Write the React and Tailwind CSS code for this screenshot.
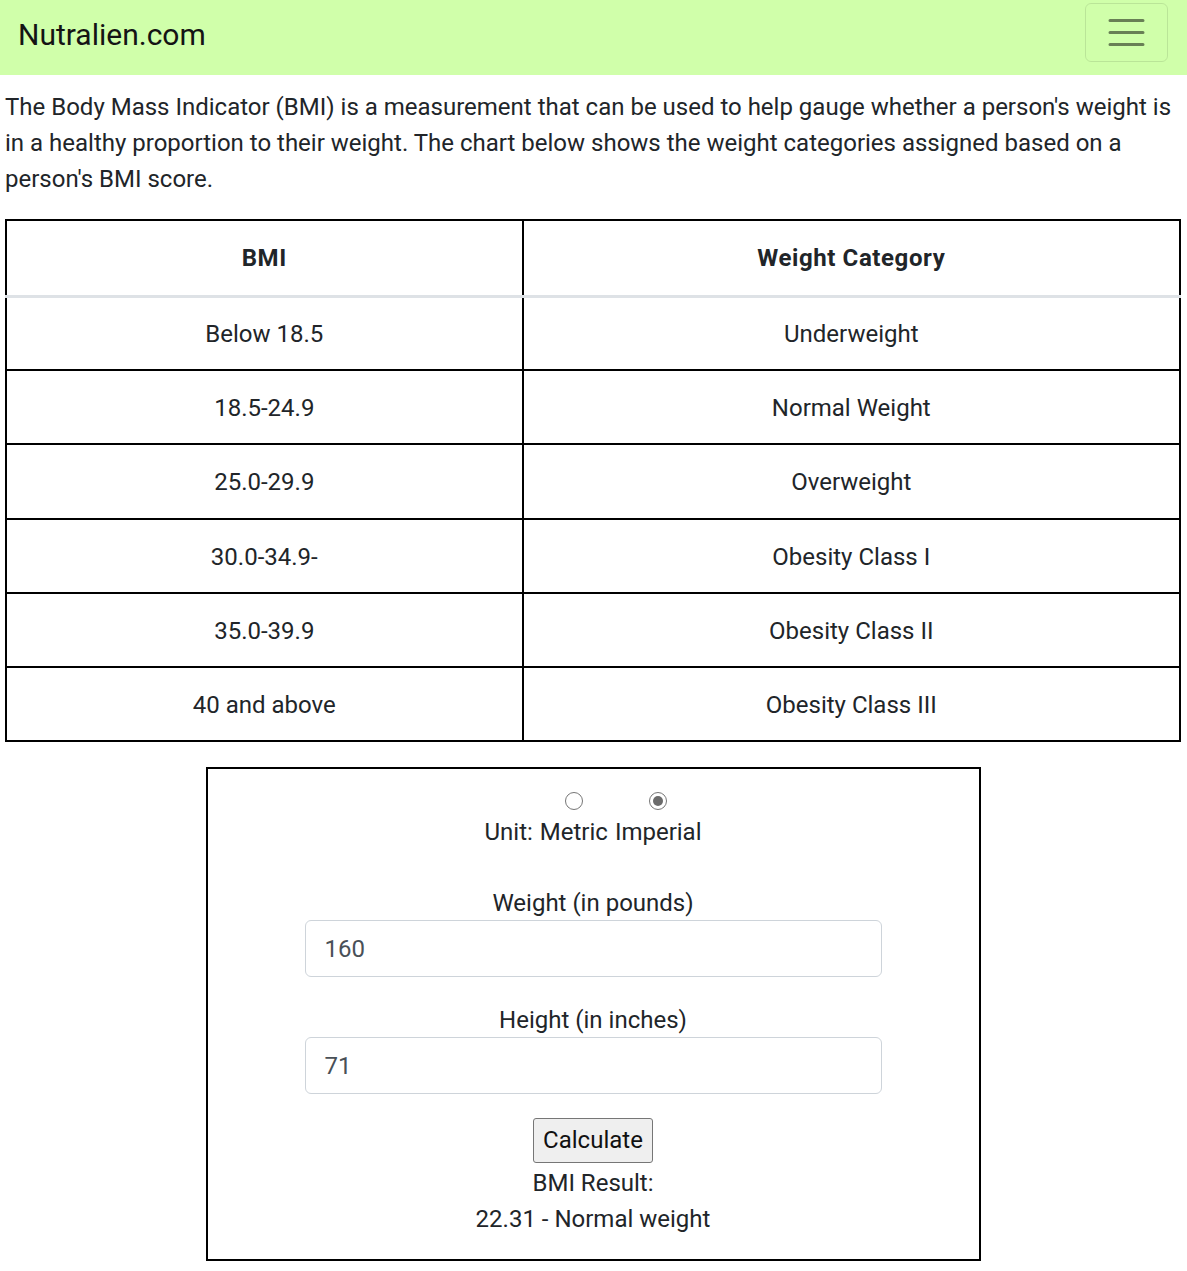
import React from "react";

const rows = [
  ["Below 18.5", "Underweight"],
  ["18.5-24.9", "Normal Weight"],
  ["25.0-29.9", "Overweight"],
  ["30.0-34.9-", "Obesity Class I"],
  ["35.0-39.9", "Obesity Class II"],
  ["40 and above", "Obesity Class III"],
];

function Radio({ checked }) {
  return (
    <div className="w-[18px] h-[18px] rounded-full border-[1.5px] border-[#767676] bg-white flex items-center justify-center">
      {checked && <div className="w-[10px] h-[10px] rounded-full bg-[#6b6b6b]" />}
    </div>
  );
}

export default function App() {
  return (
    <div className="bg-white text-[#212529] text-[24px] leading-[36px] font-['Roboto',sans-serif] min-h-[1271px]">
      <nav className="relative h-[75px] bg-[#d0ffaa] flex items-center">
        <span className="ml-[18px] text-[30px] leading-[45px] text-[#141414] -mt-[6px]">Nutralien.com</span>
        <button className="absolute top-[3px] right-[19px] w-[83px] h-[59px] rounded-[6px] border-[1.5px] border-[rgba(0,0,0,0.1)] flex items-center justify-center">
          <svg width="45" height="45" viewBox="0 0 30 30">
            <path d="M4 7h22M4 15h22M4 23h22" stroke="rgba(0,0,0,0.5)" strokeWidth="2" strokeLinecap="round" strokeMiterlimit="10" />
          </svg>
        </button>
      </nav>
      <div className="pl-[5px] pr-[6px]">
        <p className="mt-[14px] mb-[22px]">
          The Body Mass Indicator (BMI) is a measurement that can be used to help gauge whether a person's weight is in a healthy proportion to their weight. The chart below shows the weight categories assigned based on a person's BMI score.
        </p>
        <table className="w-full border-collapse border-2 border-black text-center">
          <thead>
            <tr>
              <th className="w-[44%] h-[76px] border-2 border-black border-b-[3px] border-b-[#dee2e6] font-bold tracking-[0.6px]">BMI</th>
              <th className="h-[76px] border-2 border-black border-b-[3px] border-b-[#dee2e6] font-bold tracking-[0.6px]">Weight Category</th>
            </tr>
          </thead>
          <tbody>
            {rows.map(([a, b]) => (
              <tr key={a}>
                <td className="h-[74.2px] pt-[2px] border-2 border-black">{a}</td>
                <td className="h-[74.2px] pt-[2px] border-2 border-black">{b}</td>
              </tr>
            ))}
          </tbody>
        </table>
        <div className="mx-auto mt-[25px] w-[775px] border-2 border-black pt-[23px] pb-[22px] text-center flex flex-col items-center">
          <div className="flex items-end gap-[7px]">
            <span>Unit:</span>
            <div className="flex flex-col items-center">
              <Radio />
              <span className="mt-[4px]">Metric</span>
            </div>
            <div className="flex flex-col items-center">
              <Radio checked />
              <span className="mt-[4px]">Imperial</span>
            </div>
          </div>
          <div className="mt-[36px] leading-[34px]">Weight (in pounds)</div>
          <div className="w-[577px] h-[57px] border-[1.5px] border-[#ced4da] rounded-[6px] text-left pl-[19px] flex items-center text-[#495057]">160</div>
          <div className="mt-[26px] leading-[34px]">Height (in inches)</div>
          <div className="w-[577px] h-[57px] border-[1.5px] border-[#ced4da] rounded-[6px] text-left pl-[19px] flex items-center text-[#495057]">71</div>
          <button className="mt-[24px] w-[120px] h-[45px] bg-[#efefef] border border-[#767676] rounded-[3px] text-[#111] leading-[43px]">Calculate</button>
          <div className="mt-[2px]">BMI Result:</div>
          <div>22.31 - Normal weight</div>
        </div>
      </div>
    </div>
  );
}
